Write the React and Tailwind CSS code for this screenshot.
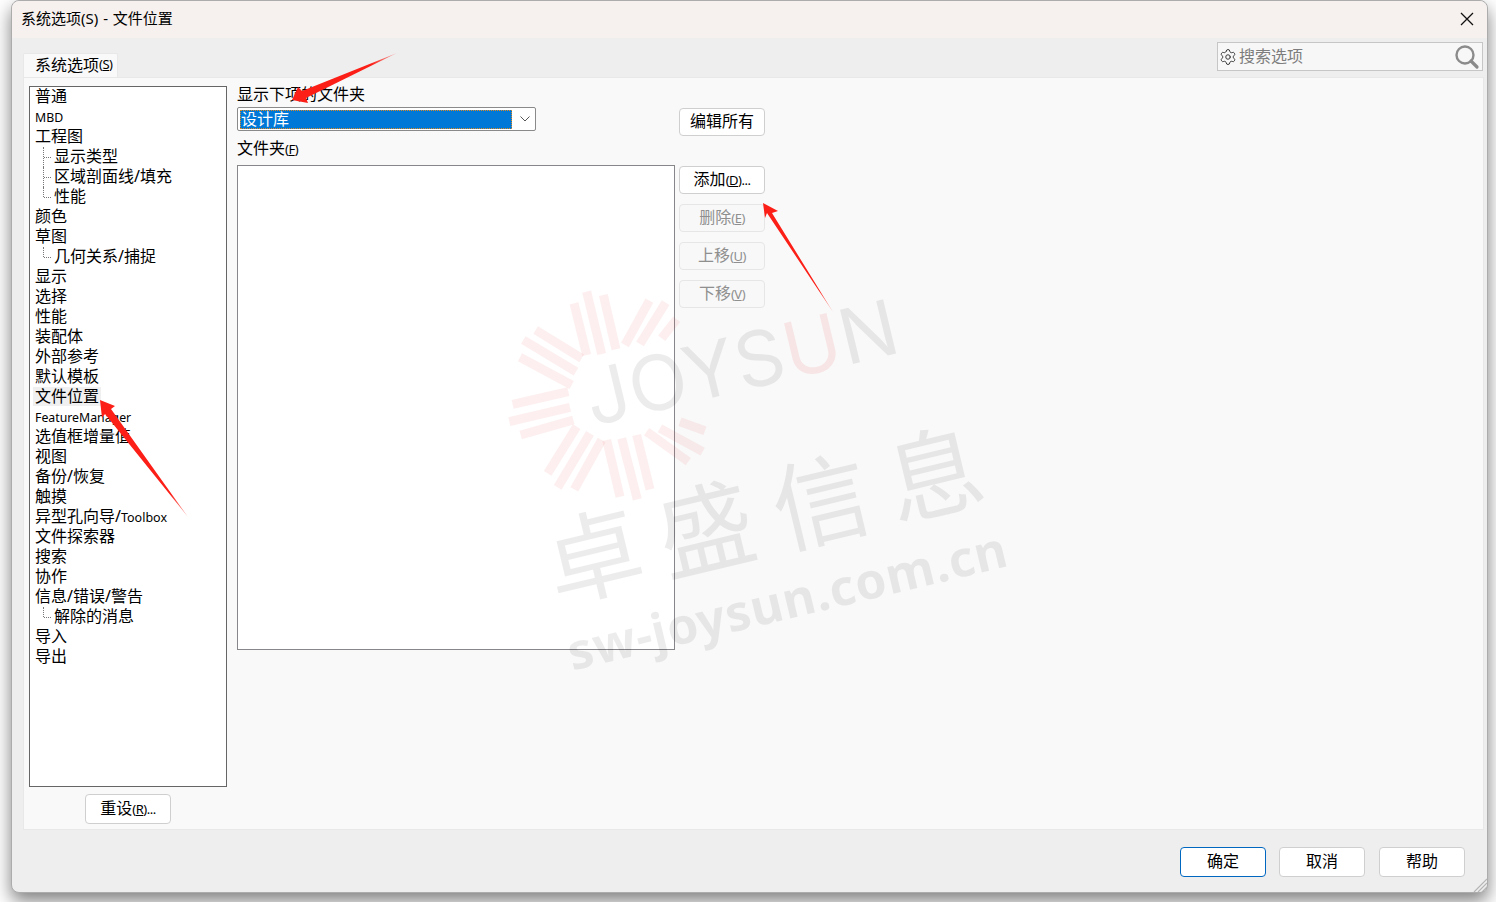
import React from "react";
import { Settings } from "lucide-react";

const font = { fontFamily: '"Noto Sans","Noto Sans CJK SC",sans-serif' };

const tree = [
  ["普通"], ["MBD", 0, "latin"], ["工程图"], ["显示类型", 1], ["区域剖面线/填充", 1], ["性能", 2],
  ["颜色"], ["草图"], ["几何关系/捕捉", 2], ["显示"], ["选择"], ["性能"], ["装配体"], ["外部参考"],
  ["默认模板"], ["文件位置", 0, "sel"], ["FeatureManager", 0, "latin"], ["选值框增量值"], ["视图"],
  ["备份/恢复"], ["触摸"], ["异型孔向导/Toolbox", 0, "mix"], ["文件探索器"], ["搜索"], ["协作"],
  ["信息/错误/警告"], ["解除的消息", 2], ["导入"], ["导出"],
];

function TreeRow({ item }) {
  const [label, level, kind] = item;
  if (level) {
    return (
      <div className="relative h-5 pl-6 text-[16px] leading-[18px] whitespace-nowrap">
        <span className={level === 1 ? "absolute left-[13px] top-0 h-5 border-l border-dotted border-[#777]" : "absolute left-[13px] top-0 h-[10px] border-l border-dotted border-[#777]"} />
        <span className="absolute left-[14px] top-[10px] w-[7px] border-t border-dotted border-[#777]" />
        {label}
      </div>
    );
  }
  if (kind === "latin") return <div className="h-5 pl-[5px] text-[12.3px] leading-[21px] whitespace-nowrap">{label}</div>;
  if (kind === "mix")
    return <div className="h-5 pl-[5px] text-[16px] leading-[18px] whitespace-nowrap">异型孔向导/<span className="text-[12.5px]">Toolbox</span></div>;
  if (kind === "sel")
    return <div className="h-5 pl-[3px] text-[16px] leading-[18px] whitespace-nowrap"><span className="inline-block h-[19px] bg-[#f0f0f0] px-[2px]">{label}</span></div>;
  return <div className="h-5 pl-[5px] text-[16px] leading-[18px] whitespace-nowrap">{label}</div>;
}

function Key({ k, after }) {
  return <span className="text-[13px] tracking-[-0.5px]">(<span className="underline">{k}</span>){after}</span>;
}

function Btn({ children, disabled, primary, h = "h-7", className = "" }) {
  const look = primary
    ? "border-[#0067c0] bg-white text-black"
    : disabled
    ? "border-[#e6e6e6] bg-[#f8f8f8] text-[#8f8f8f]"
    : "border-[#cfcfcf] bg-white text-black";
  return (
    <button className={`flex w-[86px] ${h} items-center justify-center rounded-[4px] border pb-[2px] text-[16px] leading-none ${look} ${className}`}>
      <span>{children}</span>
    </button>
  );
}

function Watermark() {
  const bars = [
    [252,70,290,225],[290,35,335,222],[340,45,378,208],
    [478,62,405,195],[527,68,450,192],[560,118,515,175],
    [137,150,275,235],[100,180,258,275],[90,232,245,315],
    [68,373,235,335],[58,425,240,382],[92,465,250,420],
    [173,580,260,440],[203,622,300,460],[253,628,335,480],
    [390,650,350,480],[442,658,395,475],[480,628,440,465],
    [645,452,570,425],[638,515,510,445],[595,545,470,455],
  ];
  return (
    <svg className="pointer-events-none absolute left-[490px] top-[280px]" width="530" height="400" viewBox="0 0 1590 1200" style={{ overflow: "visible" }}>
      {bars.map((b, i) => (
        <line key={i} x1={b[0]} y1={b[1]} x2={b[2]} y2={b[3]} stroke="#e8262a" strokeOpacity="0.075" strokeWidth="27" />
      ))}
      <g transform="rotate(-13.5 305 430)" fontFamily="Inter, 'Noto Sans', sans-serif" fontWeight="400" fill="#000" fillOpacity="0.075">
        <text x="305" y="440" fontSize="230" letterSpacing="2">JOYS<tspan fill="#e8262a" fillOpacity="0.09">U</tspan>N</text>
      </g>
      <g transform="rotate(-13.5 200 920)" fontFamily="'Noto Sans CJK SC', sans-serif" fontWeight="400" fill="#000" fillOpacity="0.075" fontSize="290">
        <text x="185" y="965">卓</text>
        <text x="530" y="965">盛</text>
        <text x="885" y="965">信</text>
        <text x="1235" y="965">息</text>
      </g>
      <g transform="rotate(-13.5 235 1165)" fontFamily="'Noto Sans', sans-serif" fontWeight="700" fill="#000" fillOpacity="0.075">
        <text x="245" y="1175" fontSize="150" letterSpacing="2">sw-joysun.com.cn</text>
      </g>
    </svg>
  );
}

function Arrows() {
  return (
    <svg className="pointer-events-none absolute left-0 top-0" width="1496" height="902">
      <defs>
        <linearGradient id="a1" gradientUnits="userSpaceOnUse" x1="292" y1="100" x2="397" y2="53">
          <stop offset="0.75" stopColor="#fb1f17" /><stop offset="1" stopColor="#fb1f17" stopOpacity="0.3" />
        </linearGradient>
        <linearGradient id="a2" gradientUnits="userSpaceOnUse" x1="100" y1="400" x2="188" y2="517">
          <stop offset="0.8" stopColor="#fb1f17" /><stop offset="1" stopColor="#fb1f17" stopOpacity="0.4" />
        </linearGradient>
        <linearGradient id="a3" gradientUnits="userSpaceOnUse" x1="763" y1="203" x2="833" y2="312">
          <stop offset="0.8" stopColor="#fb1f17" /><stop offset="1" stopColor="#fb1f17" stopOpacity="0.4" />
        </linearGradient>
      </defs>
      <polygon fill="url(#a1)" points="292,100 298,87 302,91 397,53 306,98 308,103" />
      <polygon fill="url(#a2)" points="100,400 115,406 111,409 188,517 105,414 102,418" />
      <polygon fill="url(#a3)" points="763,203 778,211 772,213 833,312 767,213 765,218" />
    </svg>
  );
}

export default function App() {
  return (
    <div className="relative h-[902px] w-[1496px] overflow-hidden bg-white pl-[11px] text-black" style={font}>
      <div className="relative flex h-[893px] w-[1477px] flex-col rounded-lg border border-[#acacac] bg-[#eeeeee] shadow-[0_8px_18px_rgba(0,0,0,0.5)]">
        {/* title bar */}
        <div className="flex h-[37px] shrink-0 items-center justify-between rounded-t-lg bg-[#f6f1ee] pb-[3px] pl-[9px] pr-[12px]">
          <span className="text-[15px] [word-spacing:1px]">系统选项(S) - 文件位置</span>
          <svg width="14" height="14" viewBox="0 0 14 14" className="mr-[1px] mt-[2px]">
            <path d="M1 1 13 13M13 1 1 13" stroke="#111" strokeWidth="1.3" />
          </svg>
        </div>

        {/* tab strip */}
        <div className="flex h-[39px] shrink-0 items-end justify-between pl-[11px] pr-[4px]">
          <div className="flex h-6 w-[95px] items-center rounded-t-[2px] border-l border-r border-t border-[#e8e8e8] bg-[#f9f9f9] pb-[2px] pl-[11px] text-[16px]">
            系统选项<Key k="S" />
          </div>
          <div className="mb-[6px] flex h-[29px] w-[266px] items-center border border-[#c6c6c6] bg-[#f7f7f7] pl-[1px] pr-[2px] text-[16px] text-[#7d7d7d]">
            <Settings size={18} strokeWidth={1.3} className="text-[#333]" />
            <span className="ml-[2px] mb-[1px]">搜索选项</span>
            <svg width="26" height="26" viewBox="0 0 26 26" className="ml-auto">
              <circle cx="11" cy="11" r="8.5" fill="none" stroke="#8b8b8b" strokeWidth="2.4" />
              <path d="m17 17 6 6" stroke="#8b8b8b" strokeWidth="3.2" strokeLinecap="round" />
            </svg>
          </div>
        </div>

        {/* panel */}
        <div className="ml-[11px] flex h-[753px] w-[1461px] shrink-0 border border-[#e8e8e8] bg-[#f9f9f9] pl-[5px] pt-2">
          <div className="flex w-[198px] shrink-0 flex-col items-center">
            <div className="h-[701px] w-[198px] border border-[#666] bg-white">
              {tree.map((t, i) => <TreeRow key={i} item={t} />)}
            </div>
            <Btn h="h-[30px]" className="mt-[7px]">重设<Key k="R" after="..." /></Btn>
          </div>

          <div className="ml-[10px] flex w-[528px] shrink-0">
            <div className="w-[438px] shrink-0">
              <div className="h-[21px] text-[16px] leading-4">显示下项的文件夹</div>
              <div className="flex h-6 w-[299px] items-center rounded-[2px] border border-[#8a8a8a] bg-white pl-[2px] pr-[4px]">
                <div className="flex h-[19px] w-[272px] items-center border border-dotted border-[#e08a20] bg-[#0078d7] text-[16px] text-white">设计库</div>
                <svg width="10" height="6" viewBox="0 0 10 6" className="ml-[8px]">
                  <path d="m.5.5 4.5 4.5L9.500.5" fill="none" stroke="#555" />
                </svg>
              </div>
              <div className="mt-[9px] h-[25px] text-[16px] leading-4">文件夹<Key k="F" /></div>
              <div className="h-[485px] w-[438px] border border-[#86868b] bg-white" />
            </div>
            <div className="ml-[4px] flex flex-col">
              <Btn className="mt-[22px]">编辑所有</Btn>
              <Btn className="mt-[30px]">添加<Key k="D" after="..." /></Btn>
              <Btn disabled className="mt-[10px]">删除<Key k="E" /></Btn>
              <Btn disabled className="mt-[10px]">上移<Key k="U" /></Btn>
              <Btn disabled className="mt-[10px]">下移<Key k="V" /></Btn>
            </div>
          </div>
        </div>

        {/* footer */}
        <div className="flex flex-1 items-start justify-end pr-[22px] pt-[17px]">
          <Btn primary h="h-[30px]">确定</Btn>
          <Btn h="h-[30px]" className="ml-[13px]">取消</Btn>
          <Btn h="h-[30px]" className="ml-[14px]">帮助</Btn>
        </div>

        <svg width="14" height="14" viewBox="0 0 14 14" className="absolute bottom-0 right-0">
          <path d="M14 1 1 14M14 5 5 14M14 9 9 14" stroke="#b5b5b5" strokeWidth="1.2" />
        </svg>
      </div>
      <Watermark />
      <Arrows />
    </div>
  );
}
